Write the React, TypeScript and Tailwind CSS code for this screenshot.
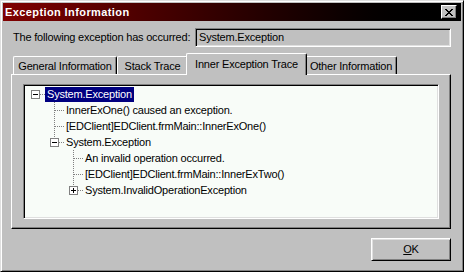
import React from "react";

type Cell = "none" | "I" | "T" | "L" | "root" | "Lminus" | "Lplus";

const DOT = "#808080";

function Connector({ kind }: { kind: Cell }) {
  const box = kind === "root" || kind === "Lminus" || kind === "Lplus";
  const plus = kind === "Lplus";
  return (
    <svg width="19" height="16" viewBox="0 0 19 16" shapeRendering="crispEdges" className="shrink-0">
      {(kind === "I" || kind === "T") && (
        <line x1="9.5" y1="0" x2="9.5" y2="16" stroke={DOT} strokeDasharray="1 1" />
      )}
      {kind === "L" && <line x1="9.5" y1="0" x2="9.5" y2="9" stroke={DOT} strokeDasharray="1 1" />}
      {(kind === "Lminus" || kind === "Lplus") && (
        <line x1="9.5" y1="0" x2="9.5" y2="4" stroke={DOT} strokeDasharray="1 1" />
      )}
      {(kind === "T" || kind === "L") && (
        <line x1="10" y1="8.5" x2="19" y2="8.5" stroke={DOT} strokeDasharray="1 1" />
      )}
      {box && (
        <>
          <line x1="14" y1="8.5" x2="19" y2="8.5" stroke={DOT} strokeDasharray="1 1" />
          <rect x="5.5" y="4.5" width="8" height="8" fill="#ffffff" stroke={DOT} />
          <line x1="7" y1="8.5" x2="12" y2="8.5" stroke="#000000" />
          {plus && <line x1="9.5" y1="6" x2="9.5" y2="11" stroke="#000000" />}
        </>
      )}
    </svg>
  );
}

const rows: { cells: Cell[]; text: string; selected?: boolean }[] = [
  { cells: ["root"], text: "System.Exception", selected: true },
  { cells: ["none", "T"], text: "InnerExOne() caused an exception." },
  { cells: ["none", "T"], text: "[EDClient]EDClient.frmMain::InnerExOne()" },
  { cells: ["none", "Lminus"], text: "System.Exception" },
  { cells: ["none", "none", "T"], text: "An invalid operation occurred." },
  { cells: ["none", "none", "T"], text: "[EDClient]EDClient.frmMain::InnerExTwo()" },
  { cells: ["none", "none", "Lplus"], text: "System.InvalidOperationException" },
];

const tabs = ["General Information", "Stack Trace", "Inner Exception Trace", "Other Information"];
const tabWidths = ["w-[104px]", "w-[71px]", "w-[121px]", "w-[92px]"];

export default function App() {
  return (
    <div
      className="flex h-[272px] w-[464px] flex-col border border-t-[#dfdfdf] border-l-[#dfdfdf] border-r-black border-b-black bg-[#c0c0c0] p-[2px] text-[11px] tracking-[-0.2px] text-black shadow-[inset_1px_1px_#ffffff,inset_-1px_-1px_#808080]"
      style={{ fontFamily: '"Liberation Sans", Arial, sans-serif' }}
    >
      {/* title bar */}
      <div className="flex h-[18px] shrink-0 items-center bg-linear-to-r from-[#800000] to-black pl-[2px] pr-[4px]">
        <span className="text-[11px] font-bold tracking-[0.4px] text-white">Exception Information</span>
        <button className="ml-auto flex h-[14px] w-[16px] items-center justify-center border border-t-white border-l-white border-r-black border-b-black bg-[#c0c0c0] shadow-[inset_-1px_-1px_#808080]">
          <svg width="8" height="7" viewBox="0 0 8 7" shapeRendering="crispEdges">
            <path d="M0 0h2v1h1v1h2V1h1V0h2v1H7v1H6v1H5v1h1v1h1v1h1v1H6V6H5V5H3v1H2v1H0V6h1V5h1V4h1V3H2V2H1V1H0z" fill="#000" />
          </svg>
        </button>
      </div>

      <div className="ml-[8px] flex w-[440px] flex-col">
        {/* exception row */}
        <div className="mt-[7px] flex h-[19px] items-center">
          <span className="pl-[2px]">The following exception has occurred:</span>
          <div className="ml-auto flex h-[19px] w-[256px] items-center border border-t-[#808080] border-l-[#808080] border-r-white border-b-white pl-[3px] shadow-[inset_1px_1px_#000000,inset_-1px_-1px_#dfdfdf]">
            System.Exception
          </div>
        </div>

        {/* tabs */}
        <div className="mt-[6px] flex h-[21px] items-end pl-[2px]">
          {tabs.map((t, i) => {
            const sel = i === 2;
            return (
              <div
                key={t}
                className={
                  sel
                    ? `relative z-10 -mx-[2px] -mb-px flex h-[22px] items-start justify-center rounded-t-[2px] border-l border-t border-r border-l-white border-t-white border-r-black bg-[#c0c0c0] pt-[2px] shadow-[inset_-1px_0_#808080] ${tabWidths[i]}`
                    : `flex h-[18px] items-start justify-center rounded-t-[2px] border-l border-t border-r border-l-white border-t-white border-r-black pt-[1px] shadow-[inset_-1px_0_#808080] ${tabWidths[i]}`
                }
              >
                {t}
              </div>
            );
          })}
        </div>

        {/* tab panel */}
        <div className="h-[155px] border border-t-white border-l-white border-r-black border-b-black pl-[11px] pt-[9px] shadow-[inset_-1px_-1px_#808080]">
          <div className="h-[135px] w-[416px] border border-t-[#808080] border-l-[#808080] border-r-white border-b-white bg-[#f8fcf8] p-px shadow-[inset_1px_1px_#000000,inset_-1px_-1px_#dfdfdf]">
            <div className="flex flex-col pl-px">
              {rows.map((r, i) => (
                <div key={i} className="flex h-[16px] items-center">
                  {r.cells.map((c, j) => (
                    <Connector key={j} kind={c} />
                  ))}
                  <span
                    className={
                      r.selected
                        ? "flex h-[15px] items-center bg-[#000080] px-[2px] text-white"
                        : "flex h-[15px] items-center px-[2px]"
                    }
                  >
                    {r.text}
                  </span>
                </div>
              ))}
            </div>
          </div>
        </div>

        {/* OK */}
        <div className="mt-[9px] flex justify-end">
          <button className="flex h-[23px] w-[80px] items-center justify-center border border-t-white border-l-white border-r-black border-b-black bg-[#c0c0c0] shadow-[inset_1px_1px_#dfdfdf,inset_-1px_-1px_#808080]">
            <span className="underline underline-offset-[1px]">O</span>K
          </button>
        </div>
      </div>
    </div>
  );
}
